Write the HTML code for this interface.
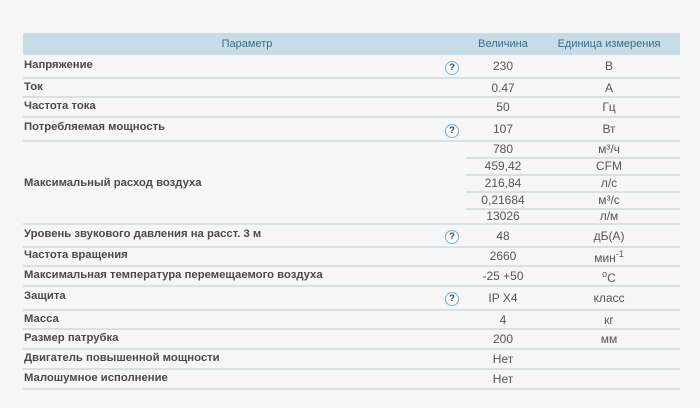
<!DOCTYPE html>
<html><head><meta charset="utf-8"><style>
html,body{margin:0;padding:0;background:#f6f6f6;width:700px;height:408px;overflow:hidden;font-family:"Liberation Sans",Arial,sans-serif;}
div{white-space:nowrap;}
.hdr{position:absolute;left:23px;top:33px;width:657px;height:22px;background:#c6dce7;}
.h{position:absolute;top:38px;font-size:11px;color:#3b6a8e;transform:translateX(-50%);}
.ln{position:absolute;height:2px;background:#d6e1e7;}
.lb{position:absolute;left:24px;font-size:11.3px;font-weight:bold;color:#4a4a4a;}
.v{position:absolute;left:503px;font-size:12px;color:#555;transform:translateX(-50%);}
.u{position:absolute;left:609px;font-size:12px;color:#555;transform:translateX(-50%);}
.q{position:absolute;left:445px;width:12px;height:12px;border:1.5px solid #7fb0cc;border-radius:50%;background:#f4f9fb;font-size:9.5px;font-weight:bold;color:#445;text-align:center;line-height:12px;}
</style></head><body>
<div class="hdr"></div>
<div class="h" style="left:247px">Параметр</div>
<div class="h" style="left:503px">Величина</div>
<div class="h" style="left:609px">Единица измерения</div>

<div class="ln" style="left:23px;width:657px;top:77px"></div>
<div class="ln" style="left:23px;width:657px;top:96px"></div>
<div class="ln" style="left:23px;width:657px;top:116px"></div>
<div class="ln" style="left:23px;width:657px;top:140px"></div>
<div class="ln" style="left:466px;width:214px;top:157px"></div>
<div class="ln" style="left:466px;width:214px;top:174px"></div>
<div class="ln" style="left:466px;width:214px;top:191px"></div>
<div class="ln" style="left:466px;width:214px;top:208px"></div>
<div class="ln" style="left:23px;width:657px;top:223px"></div>
<div class="ln" style="left:23px;width:657px;top:246px"></div>
<div class="ln" style="left:23px;width:657px;top:265px"></div>
<div class="ln" style="left:23px;width:657px;top:285px"></div>
<div class="ln" style="left:23px;width:657px;top:309px"></div>
<div class="ln" style="left:23px;width:657px;top:328px"></div>
<div class="ln" style="left:23px;width:657px;top:348px"></div>
<div class="ln" style="left:23px;width:657px;top:368px"></div>
<div class="ln" style="left:23px;width:657px;top:388px"></div>

<div class="lb" style="top:59px">Напряжение</div>
<div class="q" style="top:61px">?</div>
<div class="v" style="top:59px">230</div><div class="u" style="top:59px">В</div>

<div class="lb" style="top:81px">Ток</div>
<div class="v" style="top:81px">0.47</div><div class="u" style="top:81px">А</div>

<div class="lb" style="top:100px">Частота тока</div>
<div class="v" style="top:100px">50</div><div class="u" style="top:100px">Гц</div>

<div class="lb" style="top:121px">Потребляемая мощность</div>
<div class="q" style="top:124px">?</div>
<div class="v" style="top:122px">107</div><div class="u" style="top:122px">Вт</div>

<div class="lb" style="top:177px">Максимальный расход воздуха</div>
<div class="v" style="top:142px">780</div><div class="u" style="top:142px">м³/ч</div>
<div class="v" style="top:159px">459,42</div><div class="u" style="top:159px">CFM</div>
<div class="v" style="top:176px">216,84</div><div class="u" style="top:176px">л/с</div>
<div class="v" style="top:193px">0,21684</div><div class="u" style="top:193px">м³/с</div>
<div class="v" style="top:209px">13026</div><div class="u" style="top:209px">л/м</div>

<div class="lb" style="top:228px">Уровень звукового давления на расст. 3 м</div>
<div class="q" style="top:230px">?</div>
<div class="v" style="top:229px">48</div><div class="u" style="top:229px">дБ(А)</div>

<div class="lb" style="top:249px">Частота вращения</div>
<div class="v" style="top:249px">2660</div><div class="u" style="top:249px">мин<sup style="font-size:9px">-1</sup></div>

<div class="lb" style="top:269px">Максимальная температура перемещаемого воздуха</div>
<div class="v" style="top:269px">-25 +50</div><div class="u" style="top:269px"><sup style="font-size:9px">o</sup>C</div>

<div class="lb" style="top:290px">Защита</div>
<div class="q" style="top:292px">?</div>
<div class="v" style="top:291px">IP X4</div><div class="u" style="top:291px">класс</div>

<div class="lb" style="top:313px">Масса</div>
<div class="v" style="top:313px">4</div><div class="u" style="top:313px">кг</div>

<div class="lb" style="top:332px">Размер патрубка</div>
<div class="v" style="top:332px">200</div><div class="u" style="top:332px">мм</div>

<div class="lb" style="top:352px">Двигатель повышенной мощности</div>
<div class="v" style="top:352px">Нет</div>

<div class="lb" style="top:372px">Малошумное исполнение</div>
<div class="v" style="top:372px">Нет</div>
</body></html>
